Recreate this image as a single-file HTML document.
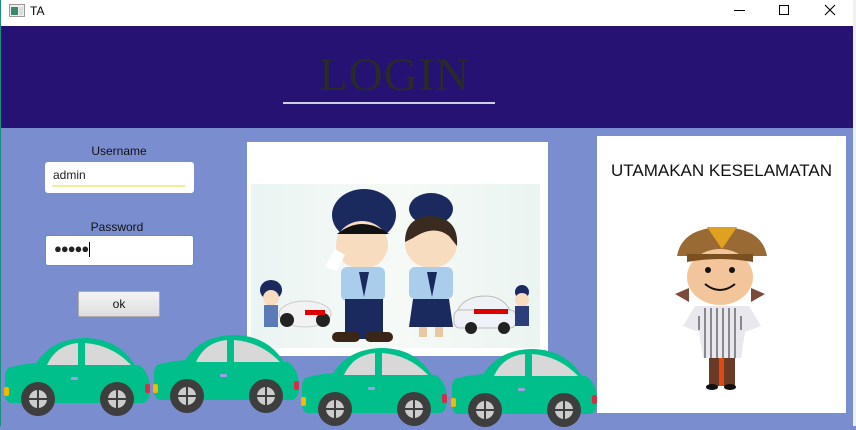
<!DOCTYPE html>
<html><head><meta charset="utf-8"><style>
*{margin:0;padding:0;box-sizing:border-box}
body{width:856px;height:426px;overflow:hidden;position:relative;background:#7a8ecf;font-family:"Liberation Sans",sans-serif}
.abs{position:absolute}
#tb{left:0;top:0;width:856px;height:26px;background:#fff}
#hdr{left:1px;top:26px;width:852px;height:102px;background:#251273}
#lb{left:0;top:0;width:1px;height:426px;background:#1a8f80}
#rb{left:853px;top:0;width:3px;height:426px;background:#f0f0f0}
.lbl{font-size:12px;color:#111;text-align:center;width:150px}
.inp{background:#fff;border-radius:3px;font-size:12px;color:#222;padding:6px 8px}
</style></head><body>
<div id="tb" class="abs">
 <svg class="abs" style="left:9px;top:4px" width="16" height="13"><rect x="0.5" y="0.5" width="15" height="12" fill="#eee" stroke="#999"/><rect x="2" y="3" width="7" height="8" fill="#3a8a6a"/><rect x="10" y="3" width="4" height="8" fill="#ddd"/></svg>
 <div class="abs" style="left:30px;top:4px;font-size:12px;color:#000">TA</div>
 <div class="abs" style="left:734px;top:10px;width:11px;height:1px;background:#000"></div>
 <div class="abs" style="left:779px;top:5px;width:10px;height:10px;border:1px solid #000"></div>
 <svg class="abs" style="left:824px;top:4px" width="12" height="12"><path d="M1 1L11 11M11 1L1 11" stroke="#000" stroke-width="1.1"/></svg>
</div>
<div id="hdr" class="abs">
 <div class="abs" style="left:318px;top:22px;font-family:'Liberation Serif',serif;font-size:47px;color:#2a2a2a;letter-spacing:1px">LOGIN</div>
 <div class="abs" style="left:282px;top:76px;width:212px;height:2px;background:#d0cde0"></div>
</div>
<div id="lb" class="abs"></div>
<div id="rb" class="abs"></div>

<div class="abs lbl" style="left:44px;top:144px">Username</div>
<div class="abs inp" style="left:45px;top:162px;width:149px;height:31px">admin<div class="abs" style="left:7px;top:23px;width:133px;height:2px;background:#f1ef9a"></div></div>
<div class="abs lbl" style="left:42px;top:220px">Password</div>
<div class="abs inp" style="left:45px;top:235px;width:149px;height:31px;border:1px solid #3d9ad8;font-size:13px;letter-spacing:-1px;padding-top:5px">●●●●●<span style="display:inline-block;width:1px;height:15px;background:#000;vertical-align:middle;margin-left:1px"></span></div>
<div class="abs" style="left:78px;top:291px;width:82px;height:26px;border:1px solid #adadad;border-radius:2px;background:linear-gradient(#f4f4f4,#dedede);font-size:12px;text-align:center;line-height:24px;color:#111">ok</div>

<div class="abs" style="left:247px;top:142px;width:301px;height:214px;background:#fff">
 <div class="abs" style="left:4px;top:42px;width:289px;height:164px;background:linear-gradient(90deg,#eaf4f2,#f6faf7,#eaf4f0)"></div>
 <svg class="abs" style="left:0;top:0" width="301" height="214">
  <!-- man -->
  <ellipse cx="117" cy="73" rx="32" ry="26" fill="#1a2a5e"/>
  <ellipse cx="115" cy="103" rx="26" ry="24" fill="#f7dcc0"/>
  <path d="M90 92q25-20 52 0" fill="#111"/>
  <rect x="94" y="125" width="44" height="34" rx="6" fill="#a9cdea"/>
  <path d="M112 130l5 25 5-25z" fill="#1a2a5e"/>
  <rect x="98" y="157" width="38" height="40" fill="#1a2a5e"/>
  <rect x="85" y="190" width="28" height="10" rx="5" fill="#3a2618"/><rect x="118" y="190" width="28" height="10" rx="5" fill="#3a2618"/>
  <path d="M78 125l10-18 10 6-8 16z" fill="#fff"/>
  <!-- woman -->
  <ellipse cx="184" cy="67" rx="22" ry="16" fill="#1a2a5e"/>
  <ellipse cx="184" cy="102" rx="26" ry="24" fill="#f7dcc0"/>
  <path d="M158 100q0-25 26-26 28 2 26 30l-8-10q-15-12-36 2z" fill="#3a2a20"/>
  <rect x="162" y="125" width="44" height="32" rx="6" fill="#a9cdea"/>
  <path d="M180 130l5 25 5-25z" fill="#1a2a5e"/>
  <path d="M166 157h36l4 28h-44z" fill="#1a2a5e"/>
  <rect x="172" y="185" width="8" height="10" fill="#e8c8a0"/><rect x="188" y="185" width="8" height="10" fill="#e8c8a0"/>
  <!-- small left -->
  <ellipse cx="24" cy="148" rx="11" ry="10" fill="#1a2a5e"/><circle cx="24" cy="156" r="8" fill="#f7dcc0"/>
  <rect x="17" y="163" width="14" height="22" fill="#5a7ab8"/>
  <ellipse cx="58" cy="172" rx="26" ry="13" fill="#f2f2f2" stroke="#ccc"/><circle cx="40" cy="178" r="7" fill="#222"/><circle cx="76" cy="178" r="7" fill="#222"/>
  <rect x="58" y="168" width="20" height="5" fill="#d00"/>
  <!-- car right -->
  <path d="M209 172q6-18 30-18 18 0 26 18z" fill="#eef2f6" stroke="#bbb"/>
  <rect x="207" y="168" width="62" height="18" rx="6" fill="#eef2f6" stroke="#bbb"/>
  <rect x="227" y="167" width="34" height="5" fill="#d00"/>
  <circle cx="224" cy="186" r="6" fill="#222"/><circle cx="257" cy="186" r="6" fill="#222"/>
  <circle cx="275" cy="150" r="7" fill="#1a2a5e"/><circle cx="275" cy="158" r="7" fill="#f7dcc0"/><rect x="268" y="164" width="14" height="20" fill="#2a3f7a"/>
 </svg>
</div>

<div class="abs" style="left:597px;top:136px;width:249px;height:277px;background:#fff">
 <div class="abs" style="left:0;top:25px;width:249px;text-align:center;font-size:17px;color:#111">UTAMAKAN KESELAMATAN</div>
 <svg class="abs" style="left:70px;top:88px" width="110" height="170">
  <path d="M10 32q5-28 45-29 40 1 45 29z" fill="#9a6a35"/>
  <path d="M40 3l15 22 15-22z" fill="#e0a020"/>
  <path d="M8 70l14-6v14zM98 70l-14-6v14z" fill="#7a4a3a"/>
  <ellipse cx="53" cy="53" rx="33" ry="28" fill="#f2c69a"/>
  <path d="M20 30h66v8q-33-6-66 0z" fill="#7a5020"/>
  <circle cx="41" cy="46" r="3" fill="#111"/><circle cx="65" cy="46" r="3" fill="#111"/>
  <path d="M38 60q15 12 30 0" stroke="#111" stroke-width="2" fill="none"/>
  <path d="M28 82l-12 20 16 6 4 26h38l4-26 16-6-12-20z" fill="#e8e8ee"/>
  <g stroke="#555" stroke-width="1.3"><path d="M38 84v50M44 84v50M50 84v50M56 84v50M62 84v50M68 84v50M32 92v14M74 92v14"/></g>
  <rect x="42" y="134" width="26" height="28" fill="#6a3a26"/>
  <rect x="52" y="134" width="5" height="28" fill="#e04a10"/>
  <ellipse cx="45" cy="163" rx="6" ry="3" fill="#111"/><ellipse cx="63" cy="163" rx="6" ry="3" fill="#111"/>
 </svg>
</div>

<svg width="0" height="0" style="position:absolute"><defs>
 <g id="car">
  <path d="M30 30Q45 2 80 1Q120 1 136 38Z" fill="#00bf8a"/>
  <path d="M8 30Q20 26 40 26L135 28Q146 36 146 52Q146 66 138 66H8Q1 66 1 56V40Q1 30 8 30Z" fill="#00bf8a"/>
  <path d="M43 28Q52 8 74 6V28Z" fill="#d8d8d8"/>
  <path d="M81 6Q108 8 127 28H81Z" fill="#d8d8d8"/>
  <rect x="67" y="40" width="7" height="3" rx="1" fill="#9aa0e0"/>
  <rect x="0" y="50" width="5" height="9" rx="2" fill="#f5b800"/>
  <rect x="141" y="47" width="5" height="9" rx="2" fill="#d0304a"/>
  <circle cx="34" cy="62" r="17" fill="#3e3e3e"/><circle cx="34" cy="62" r="9" fill="#ccc"/>
  <path d="M34 53v18M25 62h18" stroke="#3e3e3e" stroke-width="2"/>
  <circle cx="113" cy="62" r="17" fill="#3e3e3e"/><circle cx="113" cy="62" r="9" fill="#ccc"/>
  <path d="M113 53v18M104 62h18" stroke="#3e3e3e" stroke-width="2"/>
 </g>
</defs></svg>
<svg class="abs" style="left:4px;top:337px" width="148" height="82"><use href="#car"/></svg>
<svg class="abs" style="left:153px;top:334px" width="148" height="82"><use href="#car"/></svg>
<svg class="abs" style="left:301px;top:347px" width="148" height="82"><use href="#car"/></svg>
<svg class="abs" style="left:451px;top:348px" width="148" height="82"><use href="#car"/></svg>
</body></html>
